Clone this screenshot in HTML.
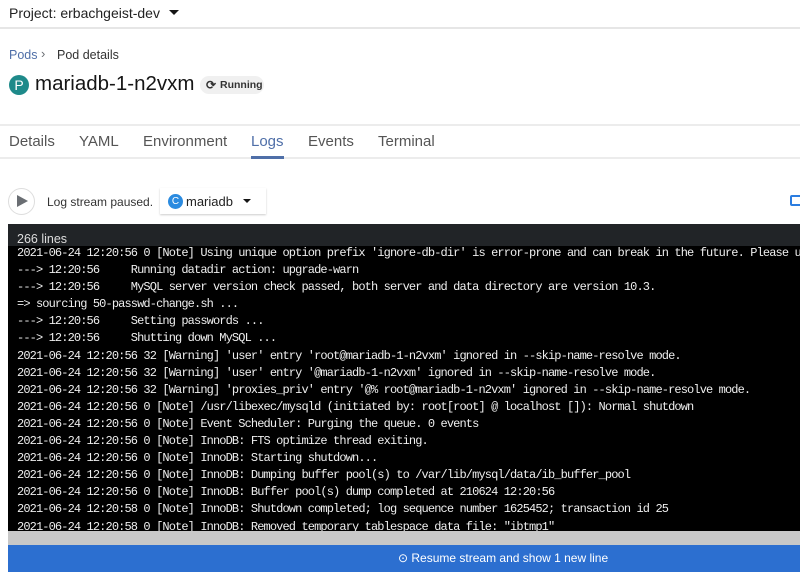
<!DOCTYPE html>
<html><head><meta charset="utf-8"><style>
*{margin:0;padding:0;box-sizing:border-box}
body{width:800px;height:587px;overflow:hidden;background:#fff;font-family:"Liberation Sans",sans-serif;color:#151515;position:relative}
.a{position:absolute;white-space:nowrap}
.log{position:absolute;left:8px;top:246px;width:792px;height:285px;background:#000;overflow:hidden}
.log pre{font-family:"Liberation Mono",monospace;font-size:12px;letter-spacing:-0.88px;color:#eee;line-height:17.1px;position:absolute;left:9px;top:-1px;white-space:pre}
</style></head><body>
<div class="a" style="left:9px;top:5px;font-size:14px;color:#222">Project: erbachgeist-dev</div>
<div class="a" style="left:169px;top:10px;width:0;height:0;border-left:5px solid transparent;border-right:5px solid transparent;border-top:5px solid #151515"></div>
<div class="a" style="left:0;top:27px;width:800px;height:2px;background:#e6e6e6"></div>
<div class="a" style="left:9px;top:48px;font-size:12.5px;color:#4f6fa8">Pods</div>
<div class="a" style="left:41px;top:46px;font-size:13px;color:#6a6e73">›</div>
<div class="a" style="left:57px;top:48px;font-size:12.5px;color:#333">Pod details</div>
<div class="a" style="left:9px;top:75px;width:20px;height:20px;border-radius:50%;background:#1e8a8a;color:#fff;font-size:14px;text-align:center;line-height:20px">P</div>
<div class="a" style="left:35px;top:72px;font-size:20.5px;color:#151515">mariadb-1-n2vxm</div>
<div class="a" style="left:200px;top:76px;width:64px;height:18px;border-radius:9px;background:#f0f0f0;font-size:10.5px;line-height:18px;padding-left:20px;font-weight:bold;color:#333">Running</div>
<div class="a" style="left:206px;top:78px;font-size:12px;font-weight:bold;color:#333">⟳</div>
<div class="a" style="left:0;top:124px;width:800px;height:2px;background:#ececec"></div>
<div class="a" style="left:0;top:157px;width:800px;height:2px;background:#ececec"></div>
<div class="a" style="left:9px;top:133px;font-size:15px;color:#555">Details</div>
<div class="a" style="left:79px;top:133px;font-size:15px;color:#555">YAML</div>
<div class="a" style="left:143px;top:133px;font-size:15px;color:#555">Environment</div>
<div class="a" style="left:251px;top:133px;font-size:15px;color:#4f6fa8">Logs</div>
<div class="a" style="left:251px;top:156px;width:33px;height:3px;background:#4f6fa8"></div>
<div class="a" style="left:308px;top:133px;font-size:15px;color:#555">Events</div>
<div class="a" style="left:378px;top:133px;font-size:15px;color:#555">Terminal</div>
<div class="a" style="left:8px;top:188px;width:27px;height:27px;border-radius:50%;border:1.5px solid #ddd;background:#fff"></div>
<div class="a" style="left:17px;top:195px;width:0;height:0;border-top:6.5px solid transparent;border-bottom:6.5px solid transparent;border-left:11px solid #6a6e73"></div>
<div class="a" style="left:47px;top:195px;font-size:12px;color:#333">Log stream paused.</div>
<div class="a" style="left:160px;top:188px;width:106px;height:26px;background:#fff;box-shadow:0 1px 2px rgba(0,0,0,.2)"></div>
<div class="a" style="left:168px;top:194px;width:15px;height:15px;border-radius:50%;background:#2b8be0;color:#fff;font-size:10px;text-align:center;line-height:15px">C</div>
<div class="a" style="left:186px;top:194px;font-size:13px;color:#222">mariadb</div>
<div class="a" style="left:243px;top:199px;width:0;height:0;border-left:4px solid transparent;border-right:4px solid transparent;border-top:4px solid #151515"></div>
<div class="a" style="left:790px;top:195px;width:12px;height:11px;border:2px solid #2b7de0;border-radius:2px"></div>
<div class="a" style="left:8px;top:224px;width:792px;height:22px;background:#212427;color:#ddd;font-size:12.5px;padding:8px 0 0 9px;line-height:14px">266 lines</div>
<div class="log"><pre>2021-06-24 12:20:56 0 [Note] Using unique option prefix 'ignore-db-dir' is error-prone and can break in the future. Please use
---> 12:20:56     Running datadir action: upgrade-warn
---> 12:20:56     MySQL server version check passed, both server and data directory are version 10.3.
=> sourcing 50-passwd-change.sh ...
---> 12:20:56     Setting passwords ...
---> 12:20:56     Shutting down MySQL ...
2021-06-24 12:20:56 32 [Warning] 'user' entry 'root@mariadb-1-n2vxm' ignored in --skip-name-resolve mode.
2021-06-24 12:20:56 32 [Warning] 'user' entry '@mariadb-1-n2vxm' ignored in --skip-name-resolve mode.
2021-06-24 12:20:56 32 [Warning] 'proxies_priv' entry '@% root@mariadb-1-n2vxm' ignored in --skip-name-resolve mode.
2021-06-24 12:20:56 0 [Note] /usr/libexec/mysqld (initiated by: root[root] @ localhost []): Normal shutdown
2021-06-24 12:20:56 0 [Note] Event Scheduler: Purging the queue. 0 events
2021-06-24 12:20:56 0 [Note] InnoDB: FTS optimize thread exiting.
2021-06-24 12:20:56 0 [Note] InnoDB: Starting shutdown...
2021-06-24 12:20:56 0 [Note] InnoDB: Dumping buffer pool(s) to /var/lib/mysql/data/ib_buffer_pool
2021-06-24 12:20:56 0 [Note] InnoDB: Buffer pool(s) dump completed at 210624 12:20:56
2021-06-24 12:20:58 0 [Note] InnoDB: Shutdown completed; log sequence number 1625452; transaction id 25
2021-06-24 12:20:58 0 [Note] InnoDB: Removed temporary tablespace data file: "ibtmp1"</pre></div>
<div class="a" style="left:8px;top:531px;width:792px;height:14px;background:#c8c8c8"></div>
<div class="a" style="left:8px;top:545px;width:792px;height:27px;background:#2c6fd0;color:#fff;font-size:12px;line-height:27px;padding-left:390px">⊙ Resume stream and show 1 new line</div>
</body></html>
